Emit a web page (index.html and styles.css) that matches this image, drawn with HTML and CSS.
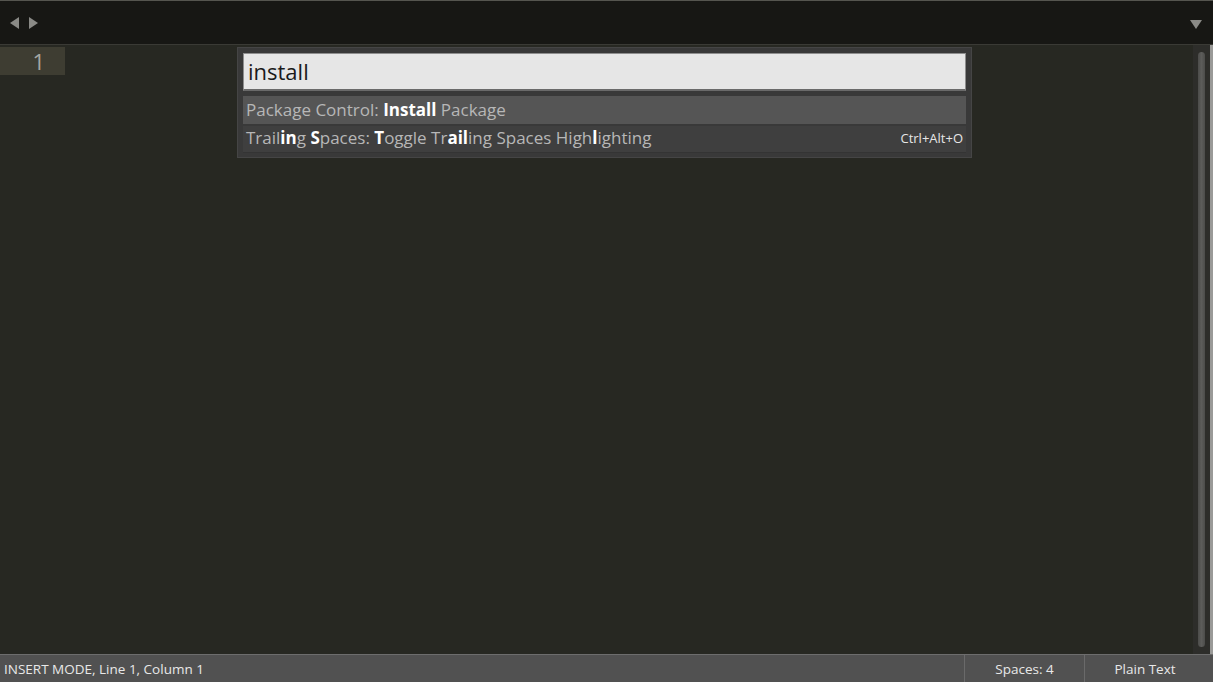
FILE: index.html
```html
<!DOCTYPE html>
<html lang="en">
	<head>
		<meta charset="UTF-8" />
		<title>untitled</title>
		<link rel="stylesheet" href="styles.css">
	</head>
	<body>
		<div class="window">
			<div class="tabbar">
				<div class="tab-nav">
					<svg width="12" height="14" viewBox="0 0 12 14"><polygon points="11,1 11,13 2,7" fill="#8a8a86"/></svg>
					<svg width="12" height="14" viewBox="0 0 12 14"><polygon points="1,1 1,13 10,7" fill="#8a8a86"/></svg>
				</div>
				<svg class="tab-menu" width="14" height="12" viewBox="0 0 14 12"><polygon points="1,2 13,2 7,11" fill="#8a8a86"/></svg>
			</div>
			<div class="main">
				<div class="editor">
					<div class="gutter">
						<div class="line-no current">1</div>
					</div>
					<div class="text-area"></div>
					<div class="palette">
						<div class="palette-input">install</div>
						<div class="palette-list">
							<div class="palette-item selected">
								<span>Package Control: <b>Install</b> Package</span>
							</div>
							<div class="palette-item">
								<span>Trail<b>in</b>g <b>S</b>paces: <b>T</b>oggle Tr<b>ail</b>ing Spaces High<b>l</b>ighting</span>
								<span class="shortcut">Ctrl+Alt+O</span>
							</div>
						</div>
					</div>
				</div>
				<div class="scrollbar">
					<div class="scroll-thumb"></div>
				</div>
			</div>
			<div class="statusbar">
				<div class="status-left">INSERT MODE, Line 1, Column 1</div>
				<div class="status-cell spaces">Spaces: 4</div>
				<div class="status-cell syntax">Plain Text</div>
			</div>
		</div>
	</body>
</html>
```

FILE: styles.css
```css
html, body {
	margin: 0;
	padding: 0;
	background-color: #272822;
	font-family: 'Open Sans', 'Noto Sans', sans-serif;
}

.window {
	display: flex;
	flex-direction: column;
	width: 1213px;
	height: 682px;
	overflow: hidden;
}

.tabbar {
	display: flex;
	align-items: center;
	justify-content: space-between;
	box-sizing: border-box;
	height: 45px;
	background-color: #171714;
	border-top: 1px solid #55554f;
	border-bottom: 1px solid #3a3a35;
	padding: 0 10px 0 8px;
}

.tab-nav {
	display: flex;
	gap: 8px;
}

.tab-menu {
	margin-top: 2px;
}

.main {
	flex: 1;
	display: flex;
	min-height: 0;
}

.editor {
	position: relative;
	flex: 1;
	display: flex;
	background-color: #272822;
}

.gutter {
	width: 65px;
	padding-top: 2px;
}

.line-no {
	height: 28px;
	line-height: 28px;
	text-align: right;
	padding-right: 20px;
	font-size: 22px;
	color: #8f908a;
}

.line-no.current {
	background-color: #3e3d32;
	color: #a6a7a2;
}

.text-area {
	flex: 1;
}

.palette {
	position: absolute;
	left: 237px;
	top: 2px;
	width: 735px;
	box-sizing: border-box;
	padding: 5px 5px 4px;
	background-color: #393939;
	border: 1px solid #454545;
}

.palette-input {
	box-sizing: border-box;
	height: 38px;
	padding: 0 4px;
	background-color: #e6e6e6;
	border: 1px solid #8e8e8e;
	border-bottom: 2px solid #6a6a6a;
	font-size: 22px;
	line-height: 34px;
	color: #1a1a1a;
}

.palette-list {
	margin-top: 5px;
}

.palette-item {
	display: flex;
	justify-content: space-between;
	align-items: center;
	box-sizing: border-box;
	height: 27px;
	padding: 0 3px 3px 3px;
	background-color: #3f3f3f;
	font-size: 17px;
	color: #b7b7b7;
	border-bottom: 1px solid #343434;
}

.palette-item.selected {
	height: 30px;
	padding-bottom: 1px;
	background-color: #555555;
	border-bottom: 2px solid #393939;
}

.palette-item b {
	color: #ffffff;
	font-weight: 700;
}

.shortcut {
	font-size: 13px;
	color: #e6e6e6;
}

.scrollbar {
	width: 20px;
	box-sizing: border-box;
	padding: 7px 5px 7px 5px;
	background-color: #2d2d2a;
	border-right: 3px solid #9a9a98;
}

.scroll-thumb {
	height: 100%;
	border-radius: 6px;
	background: linear-gradient(to right, #4c4c4a, #5c5c5a, #4c4c4a);
}

.statusbar {
	display: flex;
	box-sizing: border-box;
	height: 28px;
	background-color: #515151;
	border-top: 1px solid #6d6d6d;
	font-size: 13.5px;
	color: #e8e8e8;
	line-height: 28px;
}

.status-left {
	flex: 1;
	padding-left: 4px;
}

.status-cell {
	border-left: 1px solid #6a6a6a;
	text-align: center;
}

.spaces {
	width: 119px;
}

.syntax {
	width: 120px;
	border-right: 8px solid #515151;
}
```
